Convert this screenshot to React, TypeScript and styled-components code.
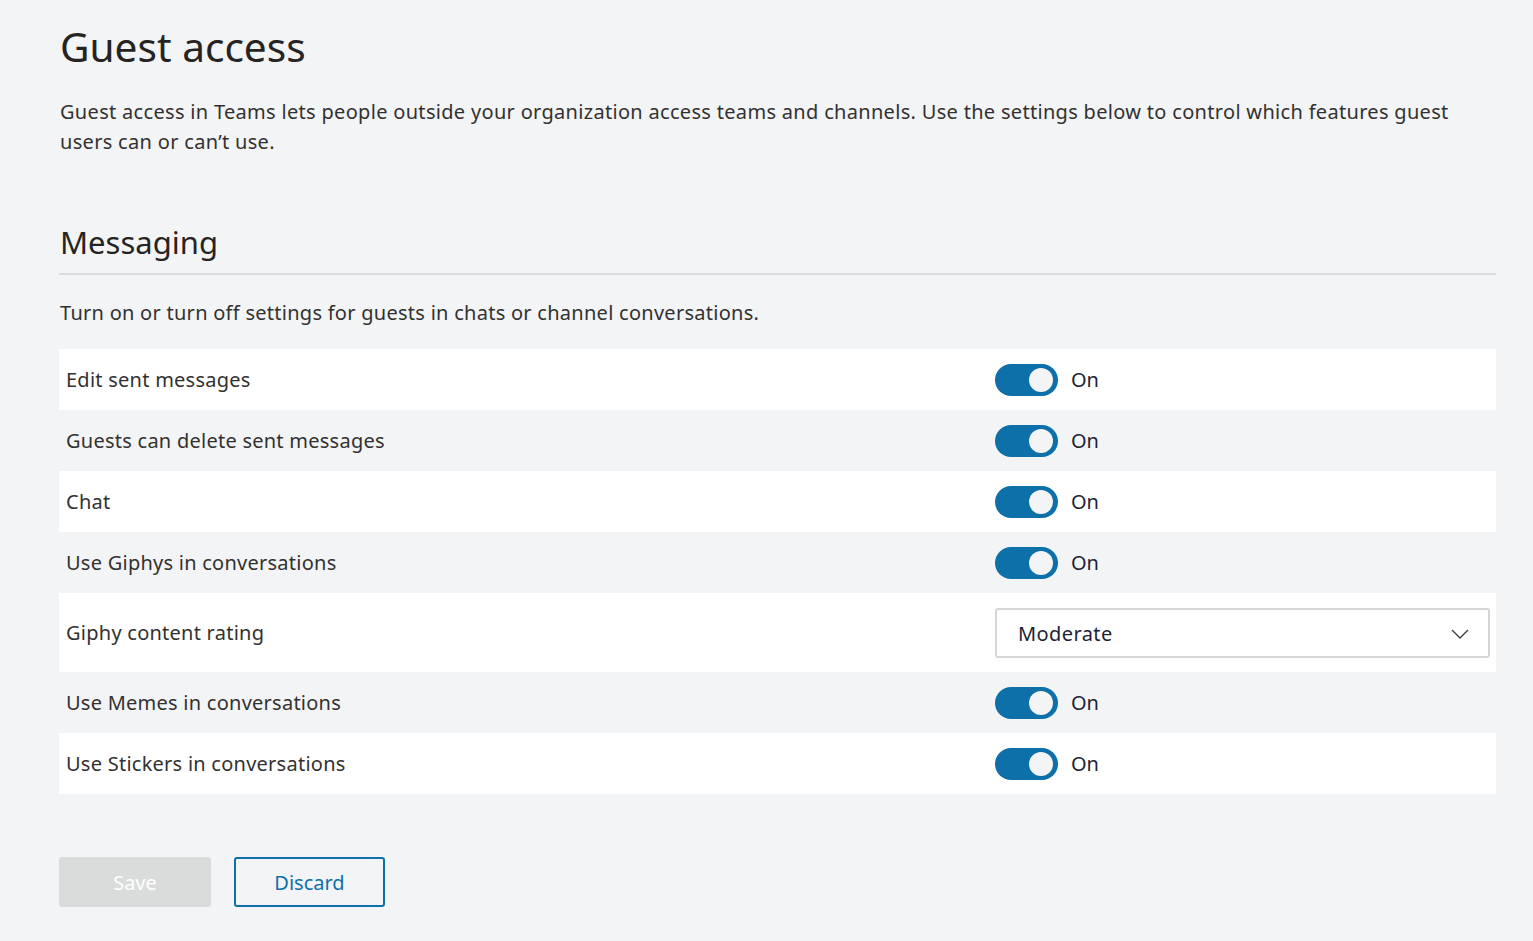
import React from "react";
import styled, { createGlobalStyle } from "styled-components";

const GlobalStyle = createGlobalStyle`
  html, body {
    margin: 0;
    padding: 0;
    background: #f3f4f6;
    font-family: "Noto Sans", "Open Sans", sans-serif;
    color: #252423;
  }
`;

type Setting =
  | { label: string; kind: "toggle"; on: boolean }
  | { label: string; kind: "select"; value: string };

const settings: Setting[] = [
  { label: "Edit sent messages", kind: "toggle", on: true },
  { label: "Guests can delete sent messages", kind: "toggle", on: true },
  { label: "Chat", kind: "toggle", on: true },
  { label: "Use Giphys in conversations", kind: "toggle", on: true },
  { label: "Giphy content rating", kind: "select", value: "Moderate" },
  { label: "Use Memes in conversations", kind: "toggle", on: true },
  { label: "Use Stickers in conversations", kind: "toggle", on: true },
];

function Chevron() {
  return (
    <svg width="18" height="10" viewBox="0 0 18 10" fill="none">
      <path d="M1 1l8 8 8-8" stroke="#3b3a39" strokeWidth="1.3" />
    </svg>
  );
}

export default function App() {
  return (
    <>
      <GlobalStyle />
      <Page>
        <Title>Guest access</Title>
        <Intro>
          Guest access in Teams lets people outside your organization access teams and channels. Use the
          settings below to control which features guest users can or can’t use.
        </Intro>

        <SectionTitle>Messaging</SectionTitle>
        <SectionNote>Turn on or turn off settings for guests in chats or channel conversations.</SectionNote>

        <List>
          {settings.map((s, i) => (
            <Row key={s.label} $striped={i % 2 === 1} $tall={s.kind === "select"}>
              <Label>{s.label}</Label>
              {s.kind === "toggle" ? (
                <ToggleWrap>
                  <Toggle $on={s.on}>
                    <Knob />
                  </Toggle>
                  <State>{s.on ? "On" : "Off"}</State>
                </ToggleWrap>
              ) : (
                <Select>
                  <span>{s.value}</span>
                  <Chevron />
                </Select>
              )}
            </Row>
          ))}
        </List>

        <Actions>
          <SaveButton disabled>Save</SaveButton>
          <DiscardButton>Discard</DiscardButton>
        </Actions>
      </Page>
    </>
  );
}

const Page = styled.main`
  padding: 18px 37px 34px 59px;
  box-sizing: border-box;
  min-height: 941px;
`;

const Title = styled.h1`
  margin: 0 0 0 1px;
  font-size: 40.6px;
  font-weight: 400;
  line-height: 58px;
  color: #252423;
`;

const Intro = styled.p`
  margin: 21px 0 0 1px;
  font-size: 20px;
  line-height: 30px;
  letter-spacing: 0.31px;
  color: #323130;
  max-width: 1415px;
`;

const SectionTitle = styled.h2`
  margin: 63px 0 0 0;
  padding: 0 0 9px 1px;
  font-size: 31px;
  font-weight: 400;
  line-height: 44px;
  color: #252423;
  border-bottom: 2px solid #dcdcdc;
`;

const SectionNote = styled.p`
  margin: 23px 0 21px 1px;
  font-size: 20px;
  line-height: 30px;
  letter-spacing: 0.27px;
  color: #323130;
`;

const List = styled.div`
  display: flex;
  flex-direction: column;
`;

const Row = styled.div<{ $striped: boolean; $tall: boolean }>`
  display: grid;
  grid-template-columns: 936px 1fr;
  align-items: center;
  height: ${(p) => (p.$tall ? "79px" : "61px")};
  padding-right: 6px;
  background: ${(p) => (p.$striped ? "#f3f4f6" : "#ffffff")};
`;

const Label = styled.span`
  padding-left: 7px;
  font-size: 20px;
  letter-spacing: 0.25px;
  color: #323130;
`;

const ToggleWrap = styled.div`
  display: flex;
  align-items: center;
  gap: 13px;
`;

const Toggle = styled.div<{ $on: boolean }>`
  width: 63px;
  height: 32px;
  border-radius: 16px;
  background: ${(p) => (p.$on ? "#0e70a9" : "#c8c6c4")};
  display: flex;
  align-items: center;
  justify-content: ${(p) => (p.$on ? "flex-end" : "flex-start")};
  padding: 0 5px;
  box-sizing: border-box;
`;

const Knob = styled.div`
  width: 24px;
  height: 24px;
  border-radius: 50%;
  background: #f3f4f6;
`;

const State = styled.span`
  font-size: 20px;
  color: #201f35;
`;

const Select = styled.div`
  height: 50px;
  box-sizing: border-box;
  border: 2px solid #d6d6d6;
  border-radius: 3px;
  background: #fff;
  display: flex;
  align-items: center;
  justify-content: space-between;
  padding: 2px 19px 0 21px;
  font-size: 20px;
  letter-spacing: 0.4px;
  color: #201f35;
`;

const Actions = styled.div`
  display: flex;
  gap: 23px;
  margin-top: 63px;
`;

const BaseButton = styled.button`
  width: 152px;
  height: 50px;
  border-radius: 3px;
  font-family: inherit;
  font-size: 20px;
  box-sizing: border-box;
`;

const SaveButton = styled(BaseButton)`
  border: none;
  background: #dadbdb;
  color: #ffffff;
`;

const DiscardButton = styled(BaseButton)`
  width: 151px;
  border: 2px solid #0e70a9;
  background: transparent;
  color: #0e70a9;
`;
